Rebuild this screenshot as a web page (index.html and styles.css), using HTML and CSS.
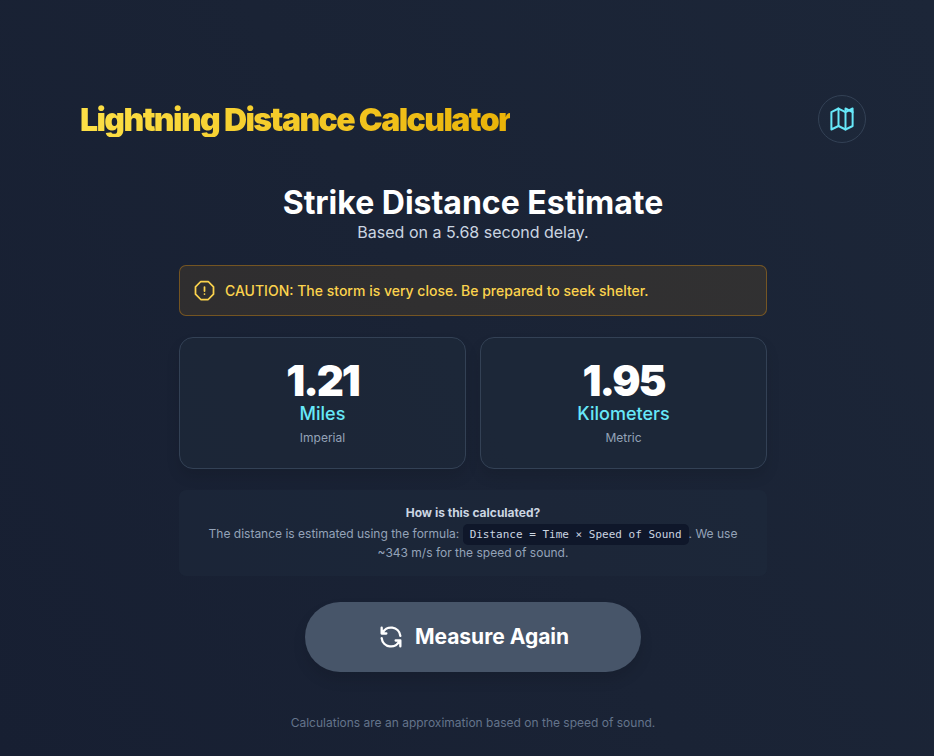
FILE: index.html
```html
<!DOCTYPE html>
<html lang="en">
<head>
<meta charset="utf-8">
<meta name="viewport" content="width=device-width, initial-scale=1">
<title>Lightning Distance Calculator</title>
<link rel="stylesheet" href="styles.css">
</head>
<body>
<div class="page">
  <header class="header">
    <h1 class="brand">Lightning Distance Calculator</h1>
    <button class="map-button" type="button" aria-label="Open map">
      <svg width="28" height="28" viewBox="0 0 24 24" fill="none" stroke="currentColor" stroke-width="1.7" stroke-linecap="round" stroke-linejoin="round" aria-hidden="true">
        <path d="M9 3 2.900 6.200V21L9 18l6 3 6.100-3V3L15 6.200z"/>
        <path d="M9 3v15M15 3v18M15 3l6.100 3.200"/>
      </svg>
    </button>
  </header>
  <main class="result">
    <div class="intro">
      <h2 class="heading">Strike Distance Estimate</h2>
      <p class="subtitle">Based on a 5.68 second delay.</p>
    </div>
    <div class="alert" role="alert">
      <svg width="21" height="21" viewBox="0 0 21 21" fill="none" stroke="currentColor" stroke-width="1.750" stroke-linecap="round" stroke-linejoin="round" aria-hidden="true">
        <path d="M6.800 1.500h7.400l5.300 5.300v7.400l-5.300 5.300H6.800l-5.300-5.300V6.800z"/>
        <path d="M10.500 7v4M10.500 14v.1"/>
      </svg>
      <p>CAUTION: The storm is very close. Be prepared to seek shelter.</p>
    </div>
    <div class="cards">
      <section class="card">
        <p class="value">1.21</p>
        <p class="unit">Miles</p>
        <p class="system">Imperial</p>
      </section>
      <section class="card">
        <p class="value">1.95</p>
        <p class="unit">Kilometers</p>
        <p class="system">Metric</p>
      </section>
    </div>
    <section class="formula">
      <h3>How is this calculated?</h3>
      <p>The distance is estimated using the formula: <code>Distance = Time × Speed of Sound</code>. We use ~343 m/s for the speed of sound.</p>
    </section>
    <button class="again" type="button">
      <svg width="28" height="28" viewBox="0 0 24 24" fill="none" stroke="currentColor" stroke-width="2" stroke-linecap="round" stroke-linejoin="round" aria-hidden="true">
        <path d="M4 4v5h4M20 11A8 8 0 0 0 4.600 9"/>
        <path d="M20 20v-5h-4M4 13a8 8 0 0 0 15.400 2"/>
      </svg>
      <span>Measure Again</span>
    </button>
  </main>
  <footer class="footer">Calculations are an approximation based on the speed of sound.</footer>
</div>
</body>
</html>
```
FILE: styles.css
```css
* {
  box-sizing: border-box;
}

body {
  margin: 0;
  min-height: 100vh;
  background: linear-gradient(60deg, #171f32, #1a2335 50%, #1c2638);
  color: #fff;
  font-family: Inter, sans-serif;
  font-size: 14px;
  line-height: 21px;
}

h1, h2, h3, p {
  margin: 0;
}

svg {
  flex: none;
}

.page {
  max-width: 826px;
  margin: 0 auto;
  padding: 95px 14px 24px 26px;
}

.header {
  display: flex;
  align-items: center;
  justify-content: space-between;
  margin-bottom: 42px;
}

.brand {
  padding-top: 2px;
  font-size: 32px;
  line-height: 34px;
  font-weight: 900;
  letter-spacing: -0.05em;
  background: linear-gradient(to right, #fde047, #eab308);
  background-clip: text;
  color: transparent;
}

.map-button {
  display: flex;
  padding: 9px;
  border: 1px solid #334155;
  border-radius: 50%;
  background: #1e293b80;
  color: #67e8f9;
}

.result {
  display: flex;
  flex-direction: column;
  gap: 21px;
  max-width: 588px;
  margin: 0 auto;
}

.intro {
  text-align: center;
}

.heading {
  font-size: 32px;
  line-height: 36px;
  font-weight: 700;
}

.subtitle {
  font-size: 16px;
  line-height: 23px;
  color: #cbd5e1;
}

.alert {
  display: flex;
  align-items: center;
  gap: 10px;
  padding: 14px;
  border: 1px solid #f59e0b59;
  border-radius: 7px;
  background: #f59e0b1a;
  color: #fcd34d;
  font-weight: 500;
}

.cards {
  display: grid;
  grid-template-columns: 1fr 1fr;
  gap: 14px;
}

.card {
  padding: 21px 20px;
  border: 1px solid #334155;
  border-radius: 14px;
  background: #1e293b99;
  box-shadow: 0 8px 14px #0000001a;
  text-align: center;
}

.value {
  font-size: 42px;
  line-height: 44px;
  font-weight: 900;
  letter-spacing: -0.05em;
}

.unit {
  font-size: 18px;
  line-height: 22px;
  font-weight: 500;
  color: #67e8f9;
}

.system {
  margin-top: 4px;
  font-size: 12px;
  line-height: 18px;
  color: #94a3b8;
}

.formula {
  padding: 14px;
  border-radius: 7px;
  background: #1e293b80;
  color: #94a3b8;
  font-size: 12px;
  line-height: 18px;
  text-align: center;
}

.formula h3 {
  margin-bottom: 3px;
  color: #cbd5e1;
  font-size: 12px;
  font-weight: 700;
}

.formula code {
  padding: 4px 7px;
  border-radius: 5px;
  background: #0f172a;
  color: #cbd5e1;
  font-family: "DejaVu Sans Mono", monospace;
  font-size: 11px;
}

.again {
  display: flex;
  align-items: center;
  justify-content: center;
  gap: 10px;
  width: 336px;
  max-width: 100%;
  min-height: 70px;
  margin: 5px auto 0;
  border: 0;
  border-radius: 35px;
  background: #475569;
  box-shadow: 0 8px 14px #0000001a;
  color: #fff;
  font: 700 21px/28px Inter, sans-serif;
}

.footer {
  margin-top: 42px;
  color: #64748b;
  font-size: 12px;
  line-height: 18px;
  text-align: center;
}
```
